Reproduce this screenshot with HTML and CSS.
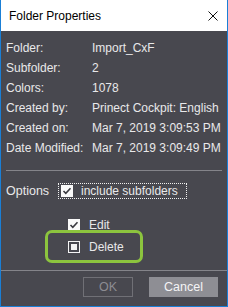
FILE: index.html
```html
<!DOCTYPE html>
<html>
<head>
<meta charset="utf-8">
<link rel="stylesheet" href="styles.css">
</head>
<body>
<div class="window">
  <div class="titlebar">
    <span class="title">Folder Properties</span>
    <svg class="close" width="10" height="10" viewBox="0 0 10 10"><path d="M0.5 0.5 L9.5 9.5 M9.5 0.5 L0.5 9.5" stroke="#111" stroke-width="1"/></svg>
  </div>
  <div class="content">
    <div class="info">
      <span>Folder:</span><span>Import_CxF</span>
      <span>Subfolder:</span><span>2</span>
      <span>Colors:</span><span>1078</span>
      <span>Created by:</span><span>Prinect Cockpit: English</span>
      <span>Created on:</span><span>Mar 7, 2019 3:09:53 PM</span>
      <span>Date Modified:</span><span>Mar 7, 2019 3:09:49 PM</span>
    </div>
    <div class="sep"></div>
    <div class="options">
      <span class="opt-label">Options</span>
      <div class="focus">
        <span class="cb checked"><svg width="12" height="12" viewBox="0 0 12 12"><path d="M2.5 6 L4.8 8.3 L9.5 3.2" fill="none" stroke="#3a3a40" stroke-width="1.6"/></svg></span>
        <span>include subfolders</span>
      </div>
    </div>
    <div class="sub">
      <div class="subrow">
        <span class="cb checked"><svg width="12" height="12" viewBox="0 0 12 12"><path d="M2.5 6 L4.8 8.3 L9.5 3.2" fill="none" stroke="#3a3a40" stroke-width="1.6"/></svg></span>
        <span>Edit</span>
      </div>
      <div class="subrow">
        <span class="cb partial"><span class="inner"></span></span>
        <span>Delete</span>
      </div>
      <div class="highlight"></div>
    </div>
  </div>
  <div class="footer">
    <div class="sep full"></div>
    <div class="buttons">
      <span class="btn ok">OK</span>
      <span class="btn cancel">Cancel</span>
    </div>
  </div>
</div>
</body>
</html>
```

FILE: styles.css
```css
html, body {
  margin: 0;
  padding: 0;
}
body {
  width: 228px;
  height: 307px;
  font-family: "Liberation Sans", Arial, sans-serif;
  font-size: 12px;
}
.window {
  box-sizing: border-box;
  width: 228px;
  height: 307px;
  border: 1px solid #1a7fd6;
  border-top: 0;
  background: #48484f;
  display: flex;
  flex-direction: column;
  color: #e8e8ea;
}
.titlebar {
  height: 31px;
  background: #fff;
  display: flex;
  align-items: center;
  justify-content: space-between;
  padding: 0 9px 0 8px;
  color: #000;
  flex: none;
}
.title {
  line-height: 14px;
  margin-top: 0px;
}
.close {
  display: block;
  margin-right: 0px;
}
.content {
  flex: 1;
  padding: 7px 5px 0 5px;
  position: relative;
}
.info {
  display: grid;
  grid-template-columns: 86px auto;
  grid-auto-rows: 20px;
  align-items: center;
  white-space: nowrap;
}
.sep {
  height: 1px;
  background: #84848a;
  margin-top: 12px;
}
.options {
  margin-top: 12px;
  display: flex;
  align-items: center;
  height: 16px;
}
.opt-label {
  width: 52px;
  font-size: 12.5px;
}
.focus {
  box-sizing: border-box;
  height: 16px;
  width: 129px;
  border: 1px dotted #f0f0f0;
  display: flex;
  align-items: center;
  padding-left: 2px;
  gap: 8px;
}
.cb {
  box-sizing: border-box;
  width: 12px;
  height: 12px;
  display: flex;
  align-items: center;
  justify-content: center;
  flex: none;
}
.cb.checked {
  background: #fafafa;
}
.cb svg {
  display: block;
}
.cb.partial {
  border: 1px solid #f4f4f4;
  background: #48484f;
}
.cb.partial .inner {
  width: 6px;
  height: 6px;
  background: #f4f4f4;
}
.sub {
  position: relative;
  padding-left: 62px;
  margin-top: 15px;
}
.subrow {
  display: flex;
  align-items: center;
  height: 22px;
  gap: 9px;
}
.highlight {
  position: absolute;
  left: 39px;
  top: 16px;
  width: 98px;
  height: 33px;
  box-sizing: border-box;
  border: 3.5px solid #8cc43e;
  border-radius: 7px;
}
.footer {
  flex: none;
  height: 36px;
}
.sep.full {
  margin-top: 0;
}
.buttons {
  display: flex;
  justify-content: flex-end;
  gap: 16px;
  padding: 6px 9px 0 0;
}
.btn {
  box-sizing: border-box;
  height: 20px;
  display: flex;
  align-items: center;
  justify-content: center;
  font-size: 12.5px;
}
.ok {
  width: 50px;
  border: 1px solid #707076;
  color: #8c8c92;
}
.cancel {
  width: 69px;
  background: #8e8e94;
  color: #f4f4f6;
}
```
